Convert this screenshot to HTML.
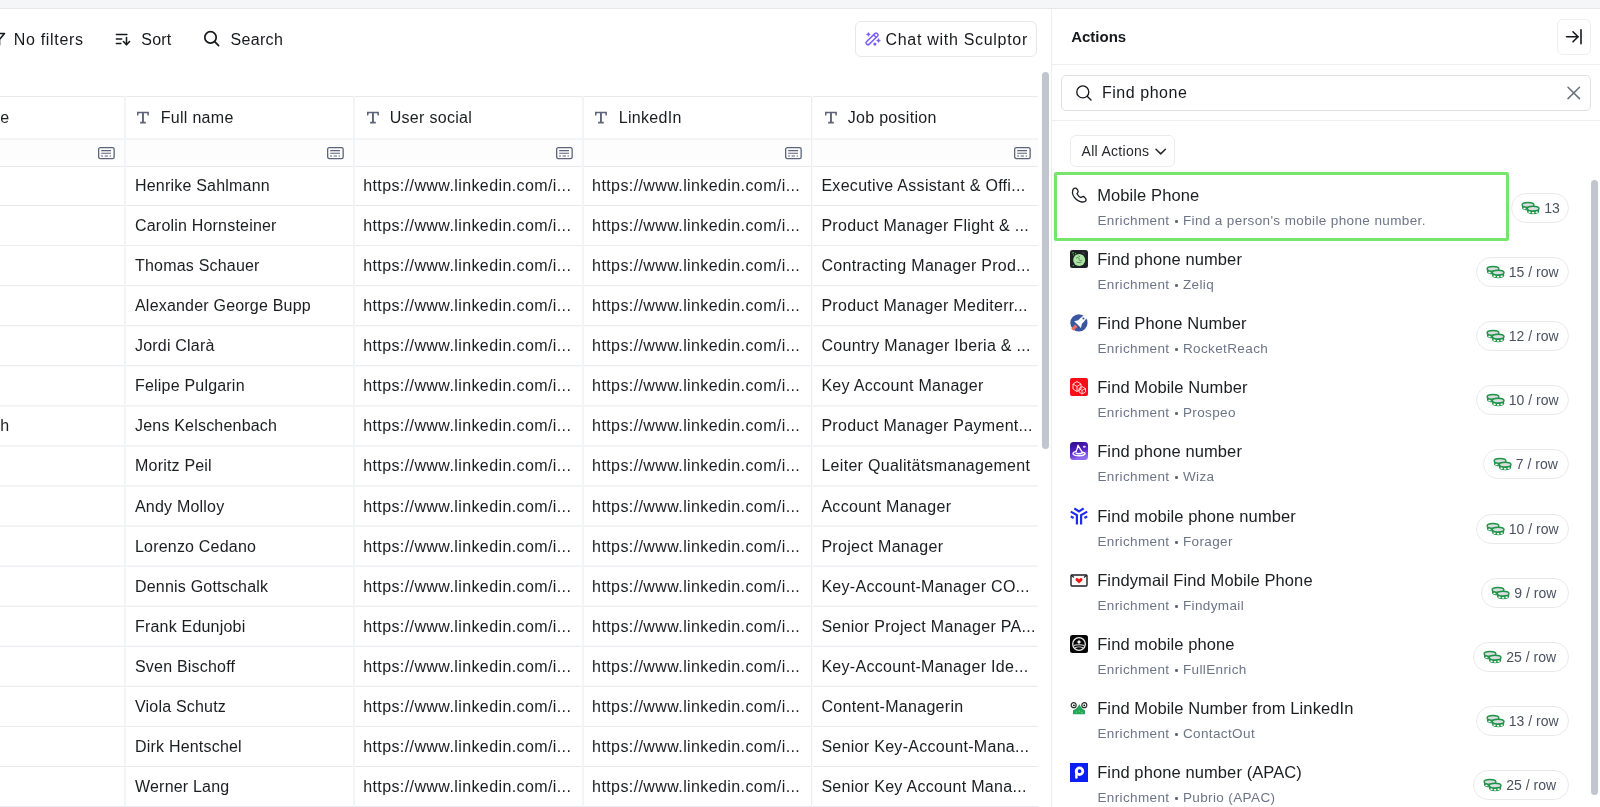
<!DOCTYPE html>
<html><head><meta charset="utf-8"><style>
html,body{margin:0;padding:0;}
body{width:1600px;height:807px;overflow:hidden;position:relative;background:#fff;font-family:"Liberation Sans",sans-serif;}
.a{position:absolute;box-sizing:content-box;}
.t{position:absolute;white-space:pre;}
.dot{display:inline-block;width:2.6px;height:2.6px;border-radius:50%;background:#5d6576;vertical-align:2.2px;margin:0 1.3px 0 1.3px;}
svg.a{overflow:visible;}
#root{position:absolute;left:0;top:0;width:1600px;height:807px;will-change:transform;}
</style></head><body><div id="root">
<div class="a" style="left:0px;top:0px;width:1600px;height:8px;background:#f5f6f7;"></div>
<div class="a" style="left:0px;top:8px;width:1600px;height:1px;background:#e6e7eb;"></div>
<svg class="a" style="left:-10px;top:31px;" width="16" height="16" viewBox="0 0 16 16" fill="none"><path d="M1 2.5H14.5L9.5 8.5V14" stroke="#16181c" stroke-width="1.6" stroke-linecap="round" stroke-linejoin="round"/></svg>
<div class="t" style="left:13.70px;top:32.00px;font-size:16px;line-height:16px;color:#16181c;font-weight:400;letter-spacing:0.7px;">No filters</div>
<svg class="a" style="left:110px;top:28px;" width="24" height="22" viewBox="0 0 24 22" fill="none"><g stroke="#16181c" stroke-width="1.5" stroke-linecap="round" stroke-linejoin="round"><path d="M6.4 6.4H16.9"/><path d="M6.4 10.9H11.7"/><path d="M6.4 15.4H10.9"/><path d="M16.5 9.4V16.6"/><path d="M13.4 13.5L16.5 16.6L19.6 13.5"/></g></svg>
<div class="t" style="left:141.30px;top:32.00px;font-size:16px;line-height:16px;color:#16181c;font-weight:400;letter-spacing:0.2px;">Sort</div>
<svg class="a" style="left:198px;top:26px;" width="24" height="24" viewBox="0 0 24 24" fill="none"><g stroke="#16181c" stroke-width="1.7" stroke-linecap="round"><circle cx="12.5" cy="11.4" r="5.7"/><path d="M16.7 15.6L20.6 19.6"/></g></svg>
<div class="t" style="left:230.60px;top:32.00px;font-size:16px;line-height:16px;color:#16181c;font-weight:400;letter-spacing:0.3px;">Search</div>
<div class="a" style="left:855px;top:21px;width:180px;height:34px;border:1px solid #e6e8eb;border-radius:6px;background:#fff;"></div>
<svg class="a" style="left:861px;top:28px;" width="24" height="22" viewBox="0 0 24 22" fill="none"><g fill="none" stroke="#7a62f8" stroke-width="1.5"><g transform="translate(11.05 10.9) rotate(-44)"><rect x="-7.4" y="-1.85" width="14.8" height="3.7" rx="1.4"/><path d="M4 -1.85V1.85"/></g></g><g fill="#7a62f8"><path d="M7.4 3.9Q7.9 5.8 9.9 6.3Q7.9 6.8 7.4 8.8Q6.9 6.8 4.8 6.3Q6.9 5.8 7.4 3.9Z"/><path d="M17.5 9.9Q18 12 20 12.5Q18 13 17.5 15.1Q17 13 15 12.5Q17 12 17.5 9.9Z"/><circle cx="13.9" cy="16.1" r="1.6"/></g></svg>
<div class="t" style="left:885.50px;top:32.00px;font-size:16px;line-height:16px;color:#16181c;font-weight:400;letter-spacing:0.7px;">Chat with Sculptor</div>
<div class="a" style="left:0px;top:139px;width:1038px;height:27px;background:#fdfdfd;"></div>
<div class="a" style="left:0px;top:96px;width:1038px;height:1px;background:rgb(231,233,237);"></div>
<div class="a" style="left:0px;top:138px;width:1038px;height:1px;background:rgb(243,244,246);"></div><div class="a" style="left:0px;top:139px;width:1038px;height:1px;background:rgb(243,244,246);"></div>
<div class="a" style="left:0px;top:166px;width:1038px;height:1px;background:rgb(231,233,237);"></div>
<div class="a" style="left:0px;top:205px;width:1038px;height:1px;background:rgb(231,233,237);"></div>
<div class="a" style="left:0px;top:245px;width:1038px;height:1px;background:rgb(233,235,238);"></div>
<div class="a" style="left:0px;top:285px;width:1038px;height:1px;background:rgb(234,236,240);"></div><div class="a" style="left:0px;top:286px;width:1038px;height:1px;background:rgb(252,252,252);"></div>
<div class="a" style="left:0px;top:325px;width:1038px;height:1px;background:rgb(236,238,241);"></div><div class="a" style="left:0px;top:326px;width:1038px;height:1px;background:rgb(250,250,251);"></div>
<div class="a" style="left:0px;top:365px;width:1038px;height:1px;background:rgb(238,239,242);"></div><div class="a" style="left:0px;top:366px;width:1038px;height:1px;background:rgb(248,249,250);"></div>
<div class="a" style="left:0px;top:405px;width:1038px;height:1px;background:rgb(239,241,243);"></div><div class="a" style="left:0px;top:406px;width:1038px;height:1px;background:rgb(247,247,249);"></div>
<div class="a" style="left:0px;top:445px;width:1038px;height:1px;background:rgb(241,242,245);"></div><div class="a" style="left:0px;top:446px;width:1038px;height:1px;background:rgb(245,246,247);"></div>
<div class="a" style="left:0px;top:485px;width:1038px;height:1px;background:rgb(243,244,246);"></div><div class="a" style="left:0px;top:486px;width:1038px;height:1px;background:rgb(243,244,246);"></div>
<div class="a" style="left:0px;top:525px;width:1038px;height:1px;background:rgb(244,245,247);"></div><div class="a" style="left:0px;top:526px;width:1038px;height:1px;background:rgb(242,243,245);"></div>
<div class="a" style="left:0px;top:565px;width:1038px;height:1px;background:rgb(246,247,248);"></div><div class="a" style="left:0px;top:566px;width:1038px;height:1px;background:rgb(240,241,244);"></div>
<div class="a" style="left:0px;top:605px;width:1038px;height:1px;background:rgb(248,248,250);"></div><div class="a" style="left:0px;top:606px;width:1038px;height:1px;background:rgb(238,240,242);"></div>
<div class="a" style="left:0px;top:645px;width:1038px;height:1px;background:rgb(249,250,251);"></div><div class="a" style="left:0px;top:646px;width:1038px;height:1px;background:rgb(237,238,241);"></div>
<div class="a" style="left:0px;top:685px;width:1038px;height:1px;background:rgb(251,251,252);"></div><div class="a" style="left:0px;top:686px;width:1038px;height:1px;background:rgb(235,237,240);"></div>
<div class="a" style="left:0px;top:725px;width:1038px;height:1px;background:rgb(253,253,253);"></div><div class="a" style="left:0px;top:726px;width:1038px;height:1px;background:rgb(233,235,239);"></div>
<div class="a" style="left:0px;top:766px;width:1038px;height:1px;background:rgb(231,233,237);"></div>
<div class="a" style="left:0px;top:806px;width:1038px;height:1px;background:rgb(232,234,238);"></div>
<div class="a" style="left:124px;top:96px;width:1px;height:711px;background:rgb(243,244,246);"></div><div class="a" style="left:125px;top:96px;width:1px;height:711px;background:rgb(243,244,246);"></div>
<div class="a" style="left:353px;top:96px;width:1px;height:711px;background:rgb(243,244,246);"></div><div class="a" style="left:354px;top:96px;width:1px;height:711px;background:rgb(243,244,246);"></div>
<div class="a" style="left:582px;top:96px;width:1px;height:711px;background:rgb(243,244,246);"></div><div class="a" style="left:583px;top:96px;width:1px;height:711px;background:rgb(243,244,246);"></div>
<div class="a" style="left:811px;top:96px;width:1px;height:711px;background:rgb(238,240,242);"></div><div class="a" style="left:812px;top:96px;width:1px;height:711px;background:rgb(248,248,250);"></div>
<div class="t" style="left:0.30px;top:110.00px;font-size:16px;line-height:16px;color:#1b1d21;font-weight:400;letter-spacing:0.3px;">e</div>
<svg class="a" style="left:136px;top:111px;" width="13" height="13" viewBox="0 0 13 13" fill="none"><path d="M1 0.8H12.9V4.4H11.6L11.2 2.3H7.9V10.7H9.8V12.5H4.1V10.7H6V2.3H2.7L2.3 4.4H1Z" fill="#5b6478"/></svg>
<div class="t" style="left:160.70px;top:110.00px;font-size:16px;line-height:16px;color:#1b1d21;font-weight:400;letter-spacing:0.3px;">Full name</div>
<svg class="a" style="left:366px;top:111px;" width="13" height="13" viewBox="0 0 13 13" fill="none"><path d="M1 0.8H12.9V4.4H11.6L11.2 2.3H7.9V10.7H9.8V12.5H4.1V10.7H6V2.3H2.7L2.3 4.4H1Z" fill="#5b6478"/></svg>
<div class="t" style="left:389.70px;top:110.00px;font-size:16px;line-height:16px;color:#1b1d21;font-weight:400;letter-spacing:0.3px;">User social</div>
<svg class="a" style="left:594px;top:111px;" width="13" height="13" viewBox="0 0 13 13" fill="none"><path d="M1 0.8H12.9V4.4H11.6L11.2 2.3H7.9V10.7H9.8V12.5H4.1V10.7H6V2.3H2.7L2.3 4.4H1Z" fill="#5b6478"/></svg>
<div class="t" style="left:618.70px;top:110.00px;font-size:16px;line-height:16px;color:#1b1d21;font-weight:400;letter-spacing:0.3px;">LinkedIn</div>
<svg class="a" style="left:824px;top:111px;" width="13" height="13" viewBox="0 0 13 13" fill="none"><path d="M1 0.8H12.9V4.4H11.6L11.2 2.3H7.9V10.7H9.8V12.5H4.1V10.7H6V2.3H2.7L2.3 4.4H1Z" fill="#5b6478"/></svg>
<div class="t" style="left:847.70px;top:110.00px;font-size:16px;line-height:16px;color:#1b1d21;font-weight:400;letter-spacing:0.3px;">Job position</div>
<svg class="a" style="left:98px;top:147px;" width="17" height="13" viewBox="0 0 17 13" fill="none"><g stroke="#5b6478"><rect x="0.65" y="0.65" width="15.5" height="10.9" rx="1.6" stroke-width="1.3"/><path d="M3.2 3.6H13M3.2 6.3H13" stroke-width="1.1"/><path d="M3.1 9H5M6.6 9H10M11.6 9H13" stroke-width="1.1"/></g></svg>
<svg class="a" style="left:327px;top:147px;" width="17" height="13" viewBox="0 0 17 13" fill="none"><g stroke="#5b6478"><rect x="0.65" y="0.65" width="15.5" height="10.9" rx="1.6" stroke-width="1.3"/><path d="M3.2 3.6H13M3.2 6.3H13" stroke-width="1.1"/><path d="M3.1 9H5M6.6 9H10M11.6 9H13" stroke-width="1.1"/></g></svg>
<svg class="a" style="left:556px;top:147px;" width="17" height="13" viewBox="0 0 17 13" fill="none"><g stroke="#5b6478"><rect x="0.65" y="0.65" width="15.5" height="10.9" rx="1.6" stroke-width="1.3"/><path d="M3.2 3.6H13M3.2 6.3H13" stroke-width="1.1"/><path d="M3.1 9H5M6.6 9H10M11.6 9H13" stroke-width="1.1"/></g></svg>
<svg class="a" style="left:785px;top:147px;" width="17" height="13" viewBox="0 0 17 13" fill="none"><g stroke="#5b6478"><rect x="0.65" y="0.65" width="15.5" height="10.9" rx="1.6" stroke-width="1.3"/><path d="M3.2 3.6H13M3.2 6.3H13" stroke-width="1.1"/><path d="M3.1 9H5M6.6 9H10M11.6 9H13" stroke-width="1.1"/></g></svg>
<svg class="a" style="left:1014px;top:147px;" width="17" height="13" viewBox="0 0 17 13" fill="none"><g stroke="#5b6478"><rect x="0.65" y="0.65" width="15.5" height="10.9" rx="1.6" stroke-width="1.3"/><path d="M3.2 3.6H13M3.2 6.3H13" stroke-width="1.1"/><path d="M3.1 9H5M6.6 9H10M11.6 9H13" stroke-width="1.1"/></g></svg>
<div class="t" style="left:135.00px;top:178.00px;font-size:16px;line-height:16px;color:#1b1d21;font-weight:400;letter-spacing:0.2px;">Henrike Sahlmann</div>
<div class="t" style="left:363.20px;top:178.00px;font-size:16px;line-height:16px;color:#1b1d21;font-weight:400;letter-spacing:0.4px;">https://www.linkedin.com/i...</div>
<div class="t" style="left:592.10px;top:178.00px;font-size:16px;line-height:16px;color:#1b1d21;font-weight:400;letter-spacing:0.4px;">https://www.linkedin.com/i...</div>
<div class="t" style="left:821.40px;top:178.00px;font-size:16px;line-height:16px;color:#1b1d21;font-weight:400;letter-spacing:0.3px;">Executive Assistant &amp; Offi...</div>
<div class="t" style="left:135.00px;top:218.00px;font-size:16px;line-height:16px;color:#1b1d21;font-weight:400;letter-spacing:0.2px;">Carolin Hornsteiner</div>
<div class="t" style="left:363.20px;top:218.00px;font-size:16px;line-height:16px;color:#1b1d21;font-weight:400;letter-spacing:0.4px;">https://www.linkedin.com/i...</div>
<div class="t" style="left:592.10px;top:218.00px;font-size:16px;line-height:16px;color:#1b1d21;font-weight:400;letter-spacing:0.4px;">https://www.linkedin.com/i...</div>
<div class="t" style="left:821.40px;top:218.00px;font-size:16px;line-height:16px;color:#1b1d21;font-weight:400;letter-spacing:0.3px;">Product Manager Flight &amp; ...</div>
<div class="t" style="left:135.00px;top:258.00px;font-size:16px;line-height:16px;color:#1b1d21;font-weight:400;letter-spacing:0.2px;">Thomas Schauer</div>
<div class="t" style="left:363.20px;top:258.00px;font-size:16px;line-height:16px;color:#1b1d21;font-weight:400;letter-spacing:0.4px;">https://www.linkedin.com/i...</div>
<div class="t" style="left:592.10px;top:258.00px;font-size:16px;line-height:16px;color:#1b1d21;font-weight:400;letter-spacing:0.4px;">https://www.linkedin.com/i...</div>
<div class="t" style="left:821.40px;top:258.00px;font-size:16px;line-height:16px;color:#1b1d21;font-weight:400;letter-spacing:0.3px;">Contracting Manager Prod...</div>
<div class="t" style="left:135.00px;top:298.00px;font-size:16px;line-height:16px;color:#1b1d21;font-weight:400;letter-spacing:0.2px;">Alexander George Bupp</div>
<div class="t" style="left:363.20px;top:298.00px;font-size:16px;line-height:16px;color:#1b1d21;font-weight:400;letter-spacing:0.4px;">https://www.linkedin.com/i...</div>
<div class="t" style="left:592.10px;top:298.00px;font-size:16px;line-height:16px;color:#1b1d21;font-weight:400;letter-spacing:0.4px;">https://www.linkedin.com/i...</div>
<div class="t" style="left:821.40px;top:298.00px;font-size:16px;line-height:16px;color:#1b1d21;font-weight:400;letter-spacing:0.3px;">Product Manager Mediterr...</div>
<div class="t" style="left:135.00px;top:338.00px;font-size:16px;line-height:16px;color:#1b1d21;font-weight:400;letter-spacing:0.2px;">Jordi Clarà</div>
<div class="t" style="left:363.20px;top:338.00px;font-size:16px;line-height:16px;color:#1b1d21;font-weight:400;letter-spacing:0.4px;">https://www.linkedin.com/i...</div>
<div class="t" style="left:592.10px;top:338.00px;font-size:16px;line-height:16px;color:#1b1d21;font-weight:400;letter-spacing:0.4px;">https://www.linkedin.com/i...</div>
<div class="t" style="left:821.40px;top:338.00px;font-size:16px;line-height:16px;color:#1b1d21;font-weight:400;letter-spacing:0.3px;">Country Manager Iberia &amp; ...</div>
<div class="t" style="left:135.00px;top:378.00px;font-size:16px;line-height:16px;color:#1b1d21;font-weight:400;letter-spacing:0.2px;">Felipe Pulgarin</div>
<div class="t" style="left:363.20px;top:378.00px;font-size:16px;line-height:16px;color:#1b1d21;font-weight:400;letter-spacing:0.4px;">https://www.linkedin.com/i...</div>
<div class="t" style="left:592.10px;top:378.00px;font-size:16px;line-height:16px;color:#1b1d21;font-weight:400;letter-spacing:0.4px;">https://www.linkedin.com/i...</div>
<div class="t" style="left:821.40px;top:378.00px;font-size:16px;line-height:16px;color:#1b1d21;font-weight:400;letter-spacing:0.3px;">Key Account Manager</div>
<div class="t" style="left:0.30px;top:418.00px;font-size:16px;line-height:16px;color:#1b1d21;font-weight:400;letter-spacing:0.3px;">h</div>
<div class="t" style="left:135.00px;top:418.00px;font-size:16px;line-height:16px;color:#1b1d21;font-weight:400;letter-spacing:0.2px;">Jens Kelschenbach</div>
<div class="t" style="left:363.20px;top:418.00px;font-size:16px;line-height:16px;color:#1b1d21;font-weight:400;letter-spacing:0.4px;">https://www.linkedin.com/i...</div>
<div class="t" style="left:592.10px;top:418.00px;font-size:16px;line-height:16px;color:#1b1d21;font-weight:400;letter-spacing:0.4px;">https://www.linkedin.com/i...</div>
<div class="t" style="left:821.40px;top:418.00px;font-size:16px;line-height:16px;color:#1b1d21;font-weight:400;letter-spacing:0.3px;">Product Manager Payment...</div>
<div class="t" style="left:135.00px;top:458.00px;font-size:16px;line-height:16px;color:#1b1d21;font-weight:400;letter-spacing:0.2px;">Moritz Peil</div>
<div class="t" style="left:363.20px;top:458.00px;font-size:16px;line-height:16px;color:#1b1d21;font-weight:400;letter-spacing:0.4px;">https://www.linkedin.com/i...</div>
<div class="t" style="left:592.10px;top:458.00px;font-size:16px;line-height:16px;color:#1b1d21;font-weight:400;letter-spacing:0.4px;">https://www.linkedin.com/i...</div>
<div class="t" style="left:821.40px;top:458.00px;font-size:16px;line-height:16px;color:#1b1d21;font-weight:400;letter-spacing:0.3px;">Leiter Qualitätsmanagement</div>
<div class="t" style="left:135.00px;top:499.00px;font-size:16px;line-height:16px;color:#1b1d21;font-weight:400;letter-spacing:0.2px;">Andy Molloy</div>
<div class="t" style="left:363.20px;top:499.00px;font-size:16px;line-height:16px;color:#1b1d21;font-weight:400;letter-spacing:0.4px;">https://www.linkedin.com/i...</div>
<div class="t" style="left:592.10px;top:499.00px;font-size:16px;line-height:16px;color:#1b1d21;font-weight:400;letter-spacing:0.4px;">https://www.linkedin.com/i...</div>
<div class="t" style="left:821.40px;top:499.00px;font-size:16px;line-height:16px;color:#1b1d21;font-weight:400;letter-spacing:0.3px;">Account Manager</div>
<div class="t" style="left:135.00px;top:539.00px;font-size:16px;line-height:16px;color:#1b1d21;font-weight:400;letter-spacing:0.2px;">Lorenzo Cedano</div>
<div class="t" style="left:363.20px;top:539.00px;font-size:16px;line-height:16px;color:#1b1d21;font-weight:400;letter-spacing:0.4px;">https://www.linkedin.com/i...</div>
<div class="t" style="left:592.10px;top:539.00px;font-size:16px;line-height:16px;color:#1b1d21;font-weight:400;letter-spacing:0.4px;">https://www.linkedin.com/i...</div>
<div class="t" style="left:821.40px;top:539.00px;font-size:16px;line-height:16px;color:#1b1d21;font-weight:400;letter-spacing:0.3px;">Project Manager</div>
<div class="t" style="left:135.00px;top:579.00px;font-size:16px;line-height:16px;color:#1b1d21;font-weight:400;letter-spacing:0.2px;">Dennis Gottschalk</div>
<div class="t" style="left:363.20px;top:579.00px;font-size:16px;line-height:16px;color:#1b1d21;font-weight:400;letter-spacing:0.4px;">https://www.linkedin.com/i...</div>
<div class="t" style="left:592.10px;top:579.00px;font-size:16px;line-height:16px;color:#1b1d21;font-weight:400;letter-spacing:0.4px;">https://www.linkedin.com/i...</div>
<div class="t" style="left:821.40px;top:579.00px;font-size:16px;line-height:16px;color:#1b1d21;font-weight:400;letter-spacing:0.3px;">Key-Account-Manager CO...</div>
<div class="t" style="left:135.00px;top:619.00px;font-size:16px;line-height:16px;color:#1b1d21;font-weight:400;letter-spacing:0.2px;">Frank Edunjobi</div>
<div class="t" style="left:363.20px;top:619.00px;font-size:16px;line-height:16px;color:#1b1d21;font-weight:400;letter-spacing:0.4px;">https://www.linkedin.com/i...</div>
<div class="t" style="left:592.10px;top:619.00px;font-size:16px;line-height:16px;color:#1b1d21;font-weight:400;letter-spacing:0.4px;">https://www.linkedin.com/i...</div>
<div class="t" style="left:821.40px;top:619.00px;font-size:16px;line-height:16px;color:#1b1d21;font-weight:400;letter-spacing:0.3px;">Senior Project Manager PA...</div>
<div class="t" style="left:135.00px;top:659.00px;font-size:16px;line-height:16px;color:#1b1d21;font-weight:400;letter-spacing:0.2px;">Sven Bischoff</div>
<div class="t" style="left:363.20px;top:659.00px;font-size:16px;line-height:16px;color:#1b1d21;font-weight:400;letter-spacing:0.4px;">https://www.linkedin.com/i...</div>
<div class="t" style="left:592.10px;top:659.00px;font-size:16px;line-height:16px;color:#1b1d21;font-weight:400;letter-spacing:0.4px;">https://www.linkedin.com/i...</div>
<div class="t" style="left:821.40px;top:659.00px;font-size:16px;line-height:16px;color:#1b1d21;font-weight:400;letter-spacing:0.3px;">Key-Account-Manager Ide...</div>
<div class="t" style="left:135.00px;top:699.00px;font-size:16px;line-height:16px;color:#1b1d21;font-weight:400;letter-spacing:0.2px;">Viola Schutz</div>
<div class="t" style="left:363.20px;top:699.00px;font-size:16px;line-height:16px;color:#1b1d21;font-weight:400;letter-spacing:0.4px;">https://www.linkedin.com/i...</div>
<div class="t" style="left:592.10px;top:699.00px;font-size:16px;line-height:16px;color:#1b1d21;font-weight:400;letter-spacing:0.4px;">https://www.linkedin.com/i...</div>
<div class="t" style="left:821.40px;top:699.00px;font-size:16px;line-height:16px;color:#1b1d21;font-weight:400;letter-spacing:0.3px;">Content-Managerin</div>
<div class="t" style="left:135.00px;top:739.00px;font-size:16px;line-height:16px;color:#1b1d21;font-weight:400;letter-spacing:0.2px;">Dirk Hentschel</div>
<div class="t" style="left:363.20px;top:739.00px;font-size:16px;line-height:16px;color:#1b1d21;font-weight:400;letter-spacing:0.4px;">https://www.linkedin.com/i...</div>
<div class="t" style="left:592.10px;top:739.00px;font-size:16px;line-height:16px;color:#1b1d21;font-weight:400;letter-spacing:0.4px;">https://www.linkedin.com/i...</div>
<div class="t" style="left:821.40px;top:739.00px;font-size:16px;line-height:16px;color:#1b1d21;font-weight:400;letter-spacing:0.3px;">Senior Key-Account-Mana...</div>
<div class="t" style="left:135.00px;top:779.00px;font-size:16px;line-height:16px;color:#1b1d21;font-weight:400;letter-spacing:0.2px;">Werner Lang</div>
<div class="t" style="left:363.20px;top:779.00px;font-size:16px;line-height:16px;color:#1b1d21;font-weight:400;letter-spacing:0.4px;">https://www.linkedin.com/i...</div>
<div class="t" style="left:592.10px;top:779.00px;font-size:16px;line-height:16px;color:#1b1d21;font-weight:400;letter-spacing:0.4px;">https://www.linkedin.com/i...</div>
<div class="t" style="left:821.40px;top:779.00px;font-size:16px;line-height:16px;color:#1b1d21;font-weight:400;letter-spacing:0.3px;">Senior Key Account Mana...</div>
<div class="a" style="left:1042px;top:72px;width:7px;height:377px;background:#c1c5cd;border-radius:4px;"></div>
<div class="a" style="left:1051px;top:9px;width:1px;height:798px;background:#eceef0;"></div>
<div class="t" style="left:1071.20px;top:29.00px;font-size:15px;line-height:15px;color:#16181c;font-weight:700;letter-spacing:0.0px;">Actions</div>
<div class="a" style="left:1557px;top:19px;width:32px;height:34px;border:1px solid #eceef0;border-radius:6px;"></div>
<svg class="a" style="left:1562px;top:26px;" width="24" height="22" viewBox="0 0 24 22" fill="none"><g stroke="#16181c" stroke-width="1.6" stroke-linecap="round" stroke-linejoin="round"><path d="M4.5 10.8H16"/><path d="M11 5.8L16 10.8L11 15.8"/><path d="M19 3.8V17.8"/></g></svg>
<div class="a" style="left:1052px;top:64px;width:548px;height:1px;background:#eceef0;"></div>
<div class="a" style="left:1061px;top:75px;width:528px;height:34px;border:1px solid #dcdfe4;border-radius:5px;"></div>
<svg class="a" style="left:1072px;top:81px;" width="24" height="24" viewBox="0 0 24 24" fill="none"><g stroke="#16181c" stroke-width="1.35" stroke-linecap="round"><circle cx="10.8" cy="10.9" r="6"/><path d="M15.2 15.3L19 19.1"/></g></svg>
<div class="t" style="left:1101.90px;top:85.00px;font-size:16px;line-height:16px;color:#16181c;font-weight:400;letter-spacing:0.55px;">Find phone</div>
<svg class="a" style="left:1562px;top:81px;" width="24" height="24" viewBox="0 0 24 24" fill="none"><g stroke="#6b7280" stroke-width="1.5" stroke-linecap="round"><path d="M6 6.2L17.5 17.6M17.5 6.2L6 17.6"/></g></svg>
<div class="a" style="left:1052px;top:120px;width:548px;height:1px;background:#eceef0;"></div>
<div class="a" style="left:1070px;top:135px;width:103px;height:30px;border:1px solid #e9ebee;border-radius:6px;"></div>
<div class="t" style="left:1081.50px;top:144.00px;font-size:14px;line-height:14px;color:#26282c;font-weight:400;letter-spacing:0.3px;">All Actions</div>
<svg class="a" style="left:1152px;top:145px;" width="16" height="12" viewBox="0 0 16 12" fill="none"><path d="M4 4.2L8.7 8.9L13.4 4.2" stroke="#26282c" stroke-width="1.5" stroke-linecap="round" stroke-linejoin="round"/></svg>
<div class="a" style="left:1054px;top:172px;width:449px;height:63px;border:3px solid #76e66a;border-radius:2px;"></div>
<svg class="a" style="left:1068px;top:184px;" width="22" height="22" viewBox="0 0 22 22" fill="none"><path d="M8.3 4.3C7 3.7 5.2 4.5 4.7 6.5C4 9.3 5.6 13 8.4 15.5C11.1 17.9 14.9 18.6 16.9 17.5C18 16.9 18.4 15.7 17.7 14.7L16.6 13.3C15.9 12.4 14.8 12.3 13.9 13L13.1 13.6C11.4 12.9 9.8 11.3 9 9.7L9.6 8.9C10.3 8 10.3 6.9 9.7 6Z" stroke="#1d1f23" stroke-width="1.3" stroke-linejoin="round" fill="none"/></svg>
<div class="t" style="left:1097.20px;top:187.00px;font-size:16.5px;line-height:16.5px;color:#1b1d21;font-weight:400;letter-spacing:0.1px;">Mobile Phone</div>
<div class="t" style="left:1097.40px;top:214.00px;font-size:13.5px;line-height:13.5px;color:#6c7587;font-weight:400;letter-spacing:0.38px;">Enrichment <span class="dot"></span> Find a person's mobile phone number.</div>
<div class="a" style="left:1511.0px;top:193px;width:55.5px;height:28px;border:1px solid #e7e9ec;border-radius:15px;background:#fff;"></div>
<svg class="a" style="left:1519.0px;top:198px;" width="24" height="20" viewBox="0 -0.6 24 20" fill="none"><path d="M3 6.3V9.5A6 2.5 0 0 0 15 9.5V6.3Z" fill="#1e9448"/><rect x="4.4" y="9.0" width="2.2" height="1.6" rx=".4" fill="#fff"/><rect x="7.8" y="9.7" width="2.4" height="1.6" rx=".4" fill="#fff"/><rect x="11.4" y="9.0" width="2.2" height="1.6" rx=".4" fill="#fff"/><ellipse cx="9" cy="6.3" rx="5.9" ry="2.4" fill="#dcdde1" stroke="#1e9448" stroke-width="1.4"/><path d="M8.1 10V13.2A6 2.5 0 0 0 20.1 13.2V10Z" fill="#1e9448"/><rect x="9.5" y="12.7" width="2.2" height="1.6" rx=".4" fill="#fff"/><rect x="12.9" y="13.4" width="2.4" height="1.6" rx=".4" fill="#fff"/><rect x="16.5" y="12.7" width="2.2" height="1.6" rx=".4" fill="#fff"/><ellipse cx="14.1" cy="10" rx="5.9" ry="2.4" fill="#dcdde1" stroke="#1e9448" stroke-width="1.4"/></svg>
<div class="t" style="left:1544.30px;top:201.00px;font-size:14px;line-height:14px;color:#4b5160;font-weight:400;letter-spacing:0.0px;">13</div>
<svg class="a" style="left:1070px;top:250px;" width="18" height="18" viewBox="0 0 18 18" fill="none"><rect width="18" height="18" rx="2.5" fill="#1d2126"/><circle cx="9.2" cy="9.9" r="6" fill="#a9e6a2"/><path d="M6 8.2C7.5 6.8 9.5 7.6 9.2 9.3C9 10.8 11 11.3 12.2 10M6.5 12C8 12.8 10 12.8 11.5 12.3M8.6 5.5L9.8 7" stroke="#5d7a62" stroke-width=".9" fill="none"/><circle cx="3" cy="2.8" r=".8" fill="#3fd46a"/><circle cx="5.6" cy="3.6" r=".7" fill="#3fd46a"/><circle cx="3.6" cy="4.8" r=".6" fill="#3fd46a"/><circle cx="3.3" cy="15.6" r=".7" fill="#3fd46a"/><path d="M12.5 2.5L14.5 3.8" stroke="#6b7078" stroke-width=".8"/></svg>
<div class="t" style="left:1097.20px;top:251.00px;font-size:16.5px;line-height:16.5px;color:#1b1d21;font-weight:400;letter-spacing:0.1px;">Find phone number</div>
<div class="t" style="left:1097.40px;top:278.00px;font-size:13.5px;line-height:13.5px;color:#6c7587;font-weight:400;letter-spacing:0.38px;">Enrichment <span class="dot"></span> Zeliq</div>
<div class="a" style="left:1475.5px;top:257px;width:91px;height:28px;border:1px solid #e7e9ec;border-radius:15px;background:#fff;"></div>
<svg class="a" style="left:1483.5px;top:262px;" width="24" height="20" viewBox="0 -0.6 24 20" fill="none"><path d="M3 6.3V9.5A6 2.5 0 0 0 15 9.5V6.3Z" fill="#1e9448"/><rect x="4.4" y="9.0" width="2.2" height="1.6" rx=".4" fill="#fff"/><rect x="7.8" y="9.7" width="2.4" height="1.6" rx=".4" fill="#fff"/><rect x="11.4" y="9.0" width="2.2" height="1.6" rx=".4" fill="#fff"/><ellipse cx="9" cy="6.3" rx="5.9" ry="2.4" fill="#dcdde1" stroke="#1e9448" stroke-width="1.4"/><path d="M8.1 10V13.2A6 2.5 0 0 0 20.1 13.2V10Z" fill="#1e9448"/><rect x="9.5" y="12.7" width="2.2" height="1.6" rx=".4" fill="#fff"/><rect x="12.9" y="13.4" width="2.4" height="1.6" rx=".4" fill="#fff"/><rect x="16.5" y="12.7" width="2.2" height="1.6" rx=".4" fill="#fff"/><ellipse cx="14.1" cy="10" rx="5.9" ry="2.4" fill="#dcdde1" stroke="#1e9448" stroke-width="1.4"/></svg>
<div class="t" style="left:1508.80px;top:265.00px;font-size:14px;line-height:14px;color:#4b5160;font-weight:400;letter-spacing:0.0px;">15 / row</div>
<svg class="a" style="left:1070px;top:314px;" width="18" height="18" viewBox="0 0 18 18" fill="none"><circle cx="8.9" cy="8.9" r="8.6" fill="#3a56a0"/><path d="M2.3 15.6L6.4 11.6" stroke="#f56d5f" stroke-width="3"/><path d="M17.6 0C17 3.6 15.2 7 12 9.8L10.9 13.9L8.6 11.5L6.5 9.4L4.2 7.3L8.3 6.3C11 3.1 14.2 0.6 17.6 0Z" fill="#fff"/><circle cx="13.4" cy="4.5" r="1.1" fill="#3a56a0"/></svg>
<div class="t" style="left:1097.20px;top:315.00px;font-size:16.5px;line-height:16.5px;color:#1b1d21;font-weight:400;letter-spacing:0.1px;">Find Phone Number</div>
<div class="t" style="left:1097.40px;top:342.00px;font-size:13.5px;line-height:13.5px;color:#6c7587;font-weight:400;letter-spacing:0.38px;">Enrichment <span class="dot"></span> RocketReach</div>
<div class="a" style="left:1475.5px;top:321px;width:91px;height:28px;border:1px solid #e7e9ec;border-radius:15px;background:#fff;"></div>
<svg class="a" style="left:1483.5px;top:326px;" width="24" height="20" viewBox="0 -0.6 24 20" fill="none"><path d="M3 6.3V9.5A6 2.5 0 0 0 15 9.5V6.3Z" fill="#1e9448"/><rect x="4.4" y="9.0" width="2.2" height="1.6" rx=".4" fill="#fff"/><rect x="7.8" y="9.7" width="2.4" height="1.6" rx=".4" fill="#fff"/><rect x="11.4" y="9.0" width="2.2" height="1.6" rx=".4" fill="#fff"/><ellipse cx="9" cy="6.3" rx="5.9" ry="2.4" fill="#dcdde1" stroke="#1e9448" stroke-width="1.4"/><path d="M8.1 10V13.2A6 2.5 0 0 0 20.1 13.2V10Z" fill="#1e9448"/><rect x="9.5" y="12.7" width="2.2" height="1.6" rx=".4" fill="#fff"/><rect x="12.9" y="13.4" width="2.4" height="1.6" rx=".4" fill="#fff"/><rect x="16.5" y="12.7" width="2.2" height="1.6" rx=".4" fill="#fff"/><ellipse cx="14.1" cy="10" rx="5.9" ry="2.4" fill="#dcdde1" stroke="#1e9448" stroke-width="1.4"/></svg>
<div class="t" style="left:1508.80px;top:329.00px;font-size:14px;line-height:14px;color:#4b5160;font-weight:400;letter-spacing:0.0px;">12 / row</div>
<svg class="a" style="left:1070px;top:378px;" width="18" height="18" viewBox="0 0 18 18" fill="none"><rect width="18" height="18" rx="2" fill="#fb0d18"/><g stroke="#ffd5d5" stroke-width="1" fill="none"><path d="M3 6L7 3.5L11 6V11L7 13.5L3 11Z"/><path d="M3 6L7 8.5L11 6M7 8.5V13.5"/><path d="M9 10.5L12 8.5L15.5 10.5V14L12 16L9 14Z"/><path d="M9 10.5L12 12.5L15.5 10.5M12 12.5V16"/></g></svg>
<div class="t" style="left:1097.20px;top:379.00px;font-size:16.5px;line-height:16.5px;color:#1b1d21;font-weight:400;letter-spacing:0.1px;">Find Mobile Number</div>
<div class="t" style="left:1097.40px;top:406.00px;font-size:13.5px;line-height:13.5px;color:#6c7587;font-weight:400;letter-spacing:0.38px;">Enrichment <span class="dot"></span> Prospeo</div>
<div class="a" style="left:1475.5px;top:385px;width:91px;height:28px;border:1px solid #e7e9ec;border-radius:15px;background:#fff;"></div>
<svg class="a" style="left:1483.5px;top:390px;" width="24" height="20" viewBox="0 -0.6 24 20" fill="none"><path d="M3 6.3V9.5A6 2.5 0 0 0 15 9.5V6.3Z" fill="#1e9448"/><rect x="4.4" y="9.0" width="2.2" height="1.6" rx=".4" fill="#fff"/><rect x="7.8" y="9.7" width="2.4" height="1.6" rx=".4" fill="#fff"/><rect x="11.4" y="9.0" width="2.2" height="1.6" rx=".4" fill="#fff"/><ellipse cx="9" cy="6.3" rx="5.9" ry="2.4" fill="#dcdde1" stroke="#1e9448" stroke-width="1.4"/><path d="M8.1 10V13.2A6 2.5 0 0 0 20.1 13.2V10Z" fill="#1e9448"/><rect x="9.5" y="12.7" width="2.2" height="1.6" rx=".4" fill="#fff"/><rect x="12.9" y="13.4" width="2.4" height="1.6" rx=".4" fill="#fff"/><rect x="16.5" y="12.7" width="2.2" height="1.6" rx=".4" fill="#fff"/><ellipse cx="14.1" cy="10" rx="5.9" ry="2.4" fill="#dcdde1" stroke="#1e9448" stroke-width="1.4"/></svg>
<div class="t" style="left:1508.80px;top:393.00px;font-size:14px;line-height:14px;color:#4b5160;font-weight:400;letter-spacing:0.0px;">10 / row</div>
<svg class="a" style="left:1070px;top:442px;" width="18" height="18" viewBox="0 0 18 18" fill="none"><defs><linearGradient id="wg" x1="0" y1="0" x2="0.3" y2="1"><stop offset="0" stop-color="#2a0a8a"/><stop offset=".6" stop-color="#5a22c8"/><stop offset="1" stop-color="#8e6cf0"/></linearGradient></defs><rect width="18" height="18" rx="3.5" fill="url(#wg)"/><path d="M8 3.3C9 5 10.3 7.2 12.6 10.6M8 3.3C7.6 5.5 7 7.8 6.1 9.4" stroke="#fff" stroke-width="1.3" fill="none" stroke-linecap="round"/><path d="M6.1 9.4C3.5 10.2 2.3 11.3 3.4 12.5C5 14.2 12.5 14.2 14.6 12.4C15.8 11.3 14.6 10.4 12.6 10.6C10.5 11.8 8 12 6.1 11.2" stroke="#fff" stroke-width="1.4" fill="none" stroke-linecap="round"/><ellipse cx="14.3" cy="4.8" rx="1.5" ry="1" fill="#e8e4ff"/><circle cx="9.4" cy="7.8" r=".8" fill="#4a6bff"/></svg>
<div class="t" style="left:1097.20px;top:443.00px;font-size:16.5px;line-height:16.5px;color:#1b1d21;font-weight:400;letter-spacing:0.1px;">Find phone number</div>
<div class="t" style="left:1097.40px;top:470.00px;font-size:13.5px;line-height:13.5px;color:#6c7587;font-weight:400;letter-spacing:0.38px;">Enrichment <span class="dot"></span> Wiza</div>
<div class="a" style="left:1482.5px;top:449px;width:84px;height:28px;border:1px solid #e7e9ec;border-radius:15px;background:#fff;"></div>
<svg class="a" style="left:1490.5px;top:454px;" width="24" height="20" viewBox="0 -0.6 24 20" fill="none"><path d="M3 6.3V9.5A6 2.5 0 0 0 15 9.5V6.3Z" fill="#1e9448"/><rect x="4.4" y="9.0" width="2.2" height="1.6" rx=".4" fill="#fff"/><rect x="7.8" y="9.7" width="2.4" height="1.6" rx=".4" fill="#fff"/><rect x="11.4" y="9.0" width="2.2" height="1.6" rx=".4" fill="#fff"/><ellipse cx="9" cy="6.3" rx="5.9" ry="2.4" fill="#dcdde1" stroke="#1e9448" stroke-width="1.4"/><path d="M8.1 10V13.2A6 2.5 0 0 0 20.1 13.2V10Z" fill="#1e9448"/><rect x="9.5" y="12.7" width="2.2" height="1.6" rx=".4" fill="#fff"/><rect x="12.9" y="13.4" width="2.4" height="1.6" rx=".4" fill="#fff"/><rect x="16.5" y="12.7" width="2.2" height="1.6" rx=".4" fill="#fff"/><ellipse cx="14.1" cy="10" rx="5.9" ry="2.4" fill="#dcdde1" stroke="#1e9448" stroke-width="1.4"/></svg>
<div class="t" style="left:1515.80px;top:457.00px;font-size:14px;line-height:14px;color:#4b5160;font-weight:400;letter-spacing:0.0px;">7 / row</div>
<svg class="a" style="left:1070px;top:507px;" width="18" height="18" viewBox="0 0 18 18" fill="none"><g stroke="#1f2cf0" stroke-width="2.2" stroke-linecap="butt" stroke-linejoin="miter" fill="none"><path d="M4.3 1.4L9 4.4L13.7 1.4"/><path d="M0.8 4.6L6.9 8.1V17.4"/><path d="M17.2 4.6L11.1 8.1V17.4"/><path d="M0.8 9.4L3.6 11"/><path d="M17.2 9.4L14.4 11"/></g></svg>
<div class="t" style="left:1097.20px;top:508.00px;font-size:16.5px;line-height:16.5px;color:#1b1d21;font-weight:400;letter-spacing:0.1px;">Find mobile phone number</div>
<div class="t" style="left:1097.40px;top:535.00px;font-size:13.5px;line-height:13.5px;color:#6c7587;font-weight:400;letter-spacing:0.38px;">Enrichment <span class="dot"></span> Forager</div>
<div class="a" style="left:1475.5px;top:514px;width:91px;height:28px;border:1px solid #e7e9ec;border-radius:15px;background:#fff;"></div>
<svg class="a" style="left:1483.5px;top:519px;" width="24" height="20" viewBox="0 -0.6 24 20" fill="none"><path d="M3 6.3V9.5A6 2.5 0 0 0 15 9.5V6.3Z" fill="#1e9448"/><rect x="4.4" y="9.0" width="2.2" height="1.6" rx=".4" fill="#fff"/><rect x="7.8" y="9.7" width="2.4" height="1.6" rx=".4" fill="#fff"/><rect x="11.4" y="9.0" width="2.2" height="1.6" rx=".4" fill="#fff"/><ellipse cx="9" cy="6.3" rx="5.9" ry="2.4" fill="#dcdde1" stroke="#1e9448" stroke-width="1.4"/><path d="M8.1 10V13.2A6 2.5 0 0 0 20.1 13.2V10Z" fill="#1e9448"/><rect x="9.5" y="12.7" width="2.2" height="1.6" rx=".4" fill="#fff"/><rect x="12.9" y="13.4" width="2.4" height="1.6" rx=".4" fill="#fff"/><rect x="16.5" y="12.7" width="2.2" height="1.6" rx=".4" fill="#fff"/><ellipse cx="14.1" cy="10" rx="5.9" ry="2.4" fill="#dcdde1" stroke="#1e9448" stroke-width="1.4"/></svg>
<div class="t" style="left:1508.80px;top:522.00px;font-size:14px;line-height:14px;color:#4b5160;font-weight:400;letter-spacing:0.0px;">10 / row</div>
<svg class="a" style="left:1070px;top:574px;" width="18" height="14" viewBox="0 0 18 14" fill="none"><rect x="1" y="1" width="16" height="11" rx="1" stroke="#1d1f23" stroke-width="1.4" fill="#fff"/><path d="M1 1L4 3.5M17 1L14 3.5" stroke="#1d1f23" stroke-width="1.2"/><path d="M9 9.5L5.8 6.5C5 5.6 5.6 3.9 7 4C8 4 8.6 4.8 9 5.3C9.4 4.8 10 4 11 4C12.4 3.9 13 5.6 12.2 6.5Z" fill="#ef1c1c"/></svg>
<div class="t" style="left:1097.20px;top:572.00px;font-size:16.5px;line-height:16.5px;color:#1b1d21;font-weight:400;letter-spacing:0.1px;">Findymail Find Mobile Phone</div>
<div class="t" style="left:1097.40px;top:599.00px;font-size:13.5px;line-height:13.5px;color:#6c7587;font-weight:400;letter-spacing:0.38px;">Enrichment <span class="dot"></span> Findymail</div>
<div class="a" style="left:1481.0px;top:578px;width:85.5px;height:28px;border:1px solid #e7e9ec;border-radius:15px;background:#fff;"></div>
<svg class="a" style="left:1489.0px;top:583px;" width="24" height="20" viewBox="0 -0.6 24 20" fill="none"><path d="M3 6.3V9.5A6 2.5 0 0 0 15 9.5V6.3Z" fill="#1e9448"/><rect x="4.4" y="9.0" width="2.2" height="1.6" rx=".4" fill="#fff"/><rect x="7.8" y="9.7" width="2.4" height="1.6" rx=".4" fill="#fff"/><rect x="11.4" y="9.0" width="2.2" height="1.6" rx=".4" fill="#fff"/><ellipse cx="9" cy="6.3" rx="5.9" ry="2.4" fill="#dcdde1" stroke="#1e9448" stroke-width="1.4"/><path d="M8.1 10V13.2A6 2.5 0 0 0 20.1 13.2V10Z" fill="#1e9448"/><rect x="9.5" y="12.7" width="2.2" height="1.6" rx=".4" fill="#fff"/><rect x="12.9" y="13.4" width="2.4" height="1.6" rx=".4" fill="#fff"/><rect x="16.5" y="12.7" width="2.2" height="1.6" rx=".4" fill="#fff"/><ellipse cx="14.1" cy="10" rx="5.9" ry="2.4" fill="#dcdde1" stroke="#1e9448" stroke-width="1.4"/></svg>
<div class="t" style="left:1514.30px;top:586.00px;font-size:14px;line-height:14px;color:#4b5160;font-weight:400;letter-spacing:0.0px;">9 / row</div>
<svg class="a" style="left:1070px;top:635px;" width="18" height="18" viewBox="0 0 18 18" fill="none"><rect width="18" height="18" rx="2.5" fill="#050505"/><circle cx="9" cy="9" r="6.3" stroke="#e8e8e8" stroke-width="1.3" fill="none"/><path d="M9 4.4L9.8 6.2L11.6 7L9.8 7.8L9 9.6L8.2 7.8L6.4 7L8.2 6.2Z" fill="#fff"/><path d="M3.8 10.6C6 9.4 12 9.4 14.2 10.6M5 12.8C7 11.8 11 11.8 13 12.8" stroke="#d8d8d8" stroke-width="1.1" fill="none"/></svg>
<div class="t" style="left:1097.20px;top:636.00px;font-size:16.5px;line-height:16.5px;color:#1b1d21;font-weight:400;letter-spacing:0.1px;">Find mobile phone</div>
<div class="t" style="left:1097.40px;top:663.00px;font-size:13.5px;line-height:13.5px;color:#6c7587;font-weight:400;letter-spacing:0.38px;">Enrichment <span class="dot"></span> FullEnrich</div>
<div class="a" style="left:1473.0px;top:642px;width:93.5px;height:28px;border:1px solid #e7e9ec;border-radius:15px;background:#fff;"></div>
<svg class="a" style="left:1481.0px;top:647px;" width="24" height="20" viewBox="0 -0.6 24 20" fill="none"><path d="M3 6.3V9.5A6 2.5 0 0 0 15 9.5V6.3Z" fill="#1e9448"/><rect x="4.4" y="9.0" width="2.2" height="1.6" rx=".4" fill="#fff"/><rect x="7.8" y="9.7" width="2.4" height="1.6" rx=".4" fill="#fff"/><rect x="11.4" y="9.0" width="2.2" height="1.6" rx=".4" fill="#fff"/><ellipse cx="9" cy="6.3" rx="5.9" ry="2.4" fill="#dcdde1" stroke="#1e9448" stroke-width="1.4"/><path d="M8.1 10V13.2A6 2.5 0 0 0 20.1 13.2V10Z" fill="#1e9448"/><rect x="9.5" y="12.7" width="2.2" height="1.6" rx=".4" fill="#fff"/><rect x="12.9" y="13.4" width="2.4" height="1.6" rx=".4" fill="#fff"/><rect x="16.5" y="12.7" width="2.2" height="1.6" rx=".4" fill="#fff"/><ellipse cx="14.1" cy="10" rx="5.9" ry="2.4" fill="#dcdde1" stroke="#1e9448" stroke-width="1.4"/></svg>
<div class="t" style="left:1506.30px;top:650.00px;font-size:14px;line-height:14px;color:#4b5160;font-weight:400;letter-spacing:0.0px;">25 / row</div>
<svg class="a" style="left:1070px;top:699px;" width="18" height="18" viewBox="0 0 18 18" fill="none"><path d="M3 11.2V15.2H15V11.2C13 10.6 11 8.6 9.3 5C7.6 8.6 5.5 10.6 3 11.2Z" fill="#23a457"/><circle cx="3.7" cy="6.2" r="2.5" stroke="#2d2d2d" stroke-width="1.2" fill="#fff"/><circle cx="3.9" cy="6.3" r=".9" fill="#000"/><circle cx="14.3" cy="6.2" r="2.5" stroke="#2d2d2d" stroke-width="1.2" fill="#fff"/><circle cx="14.3" cy="6.3" r=".9" fill="#000"/><circle cx="6.5" cy="13" r=".6" fill="#8ef08e"/><circle cx="9.3" cy="12" r=".6" fill="#8ef08e"/><circle cx="12" cy="13.3" r=".6" fill="#8ef08e"/></svg>
<div class="t" style="left:1097.20px;top:700.00px;font-size:16.5px;line-height:16.5px;color:#1b1d21;font-weight:400;letter-spacing:0.1px;">Find Mobile Number from LinkedIn</div>
<div class="t" style="left:1097.40px;top:727.00px;font-size:13.5px;line-height:13.5px;color:#6c7587;font-weight:400;letter-spacing:0.38px;">Enrichment <span class="dot"></span> ContactOut</div>
<div class="a" style="left:1475.5px;top:706px;width:91px;height:28px;border:1px solid #e7e9ec;border-radius:15px;background:#fff;"></div>
<svg class="a" style="left:1483.5px;top:711px;" width="24" height="20" viewBox="0 -0.6 24 20" fill="none"><path d="M3 6.3V9.5A6 2.5 0 0 0 15 9.5V6.3Z" fill="#1e9448"/><rect x="4.4" y="9.0" width="2.2" height="1.6" rx=".4" fill="#fff"/><rect x="7.8" y="9.7" width="2.4" height="1.6" rx=".4" fill="#fff"/><rect x="11.4" y="9.0" width="2.2" height="1.6" rx=".4" fill="#fff"/><ellipse cx="9" cy="6.3" rx="5.9" ry="2.4" fill="#dcdde1" stroke="#1e9448" stroke-width="1.4"/><path d="M8.1 10V13.2A6 2.5 0 0 0 20.1 13.2V10Z" fill="#1e9448"/><rect x="9.5" y="12.7" width="2.2" height="1.6" rx=".4" fill="#fff"/><rect x="12.9" y="13.4" width="2.4" height="1.6" rx=".4" fill="#fff"/><rect x="16.5" y="12.7" width="2.2" height="1.6" rx=".4" fill="#fff"/><ellipse cx="14.1" cy="10" rx="5.9" ry="2.4" fill="#dcdde1" stroke="#1e9448" stroke-width="1.4"/></svg>
<div class="t" style="left:1508.80px;top:714.00px;font-size:14px;line-height:14px;color:#4b5160;font-weight:400;letter-spacing:0.0px;">13 / row</div>
<svg class="a" style="left:1070px;top:763px;" width="18" height="19" viewBox="0 0 18 19" fill="none"><rect width="18" height="19" fill="#0a1ff2"/><path d="M6.4 14.6V7.5" stroke="#fff" stroke-width="2.5" stroke-linecap="round"/><circle cx="9.5" cy="8.2" r="3.3" stroke="#fff" stroke-width="2.8" fill="none"/></svg>
<div class="t" style="left:1097.20px;top:764.00px;font-size:16.5px;line-height:16.5px;color:#1b1d21;font-weight:400;letter-spacing:0.1px;">Find phone number (APAC)</div>
<div class="t" style="left:1097.40px;top:791.00px;font-size:13.5px;line-height:13.5px;color:#6c7587;font-weight:400;letter-spacing:0.38px;">Enrichment <span class="dot"></span> Pubrio (APAC)</div>
<div class="a" style="left:1473.0px;top:770px;width:93.5px;height:28px;border:1px solid #e7e9ec;border-radius:15px;background:#fff;"></div>
<svg class="a" style="left:1481.0px;top:775px;" width="24" height="20" viewBox="0 -0.6 24 20" fill="none"><path d="M3 6.3V9.5A6 2.5 0 0 0 15 9.5V6.3Z" fill="#1e9448"/><rect x="4.4" y="9.0" width="2.2" height="1.6" rx=".4" fill="#fff"/><rect x="7.8" y="9.7" width="2.4" height="1.6" rx=".4" fill="#fff"/><rect x="11.4" y="9.0" width="2.2" height="1.6" rx=".4" fill="#fff"/><ellipse cx="9" cy="6.3" rx="5.9" ry="2.4" fill="#dcdde1" stroke="#1e9448" stroke-width="1.4"/><path d="M8.1 10V13.2A6 2.5 0 0 0 20.1 13.2V10Z" fill="#1e9448"/><rect x="9.5" y="12.7" width="2.2" height="1.6" rx=".4" fill="#fff"/><rect x="12.9" y="13.4" width="2.4" height="1.6" rx=".4" fill="#fff"/><rect x="16.5" y="12.7" width="2.2" height="1.6" rx=".4" fill="#fff"/><ellipse cx="14.1" cy="10" rx="5.9" ry="2.4" fill="#dcdde1" stroke="#1e9448" stroke-width="1.4"/></svg>
<div class="t" style="left:1506.30px;top:778.00px;font-size:14px;line-height:14px;color:#4b5160;font-weight:400;letter-spacing:0.0px;">25 / row</div>
<div class="a" style="left:1591px;top:180px;width:7px;height:615px;background:#c1c5cd;border-radius:4px;"></div>
</div></body></html>
